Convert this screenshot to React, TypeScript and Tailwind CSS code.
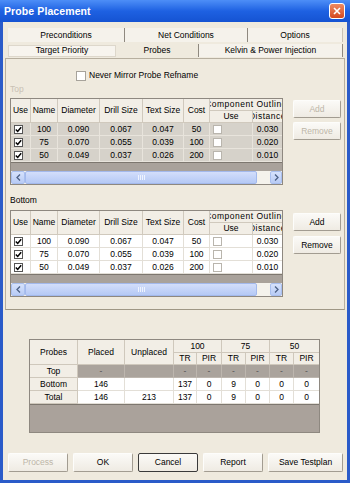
import React from "react";

const W = ["w-[20px]", "w-[27px]", "w-[42px]", "w-[43px]", "w-[41px]", "w-[26px]"];
const HEAD = ["Use", "Name", "Diameter", "Drill Size", "Text Size", "Cost"];
const ROWS = [
  ["100", "0.090", "0.067", "0.047", "50", "0.030"],
  ["75", "0.070", "0.055", "0.039", "100", "0.020"],
  ["50", "0.049", "0.037", "0.026", "200", "0.010"],
];

function Check({ checked, light }: { checked?: boolean; light?: boolean }) {
  return (
    <div
      className={`w-[9px] h-[9px] bg-white border ${
        light ? "border-[#b9b5ad]" : "border-[#555]"
      } flex items-center justify-center shrink-0`}
    >
      {checked && (
        <svg width="7" height="7" viewBox="0 0 7 7">
          <path d="M0.8 3.4 L2.7 5.4 L6.2 1.2" stroke="#000" strokeWidth="1.5" fill="none" />
        </svg>
      )}
    </div>
  );
}

function ScrollBar() {
  return (
    <div className="h-[13px] flex bg-[#f4f2ec] shrink-0">
      <div className="w-[14px] h-full bg-gradient-to-b from-[#d6e2fc] to-[#b8cbf5] border border-[#a9bfee] rounded-[2px] flex items-center justify-center">
        <svg width="5" height="7" viewBox="0 0 5 7">
          <path d="M4 0.5 L1 3.5 L4 6.5" stroke="#4d6185" strokeWidth="1.3" fill="none" />
        </svg>
      </div>
      <div className="w-[232px] h-full bg-gradient-to-b from-[#d3defb] to-[#b5c9f5] border border-[#a3b9ec] rounded-[2px] flex items-center justify-center gap-[1px]">
        <div className="w-[1px] h-[5px] bg-[#eef3fe]" />
        <div className="w-[1px] h-[5px] bg-[#eef3fe]" />
        <div className="w-[1px] h-[5px] bg-[#eef3fe]" />
        <div className="w-[1px] h-[5px] bg-[#eef3fe]" />
      </div>
      <div className="flex-1" />
      <div className="w-[12px] h-full bg-gradient-to-b from-[#d6e2fc] to-[#b8cbf5] border border-[#a9bfee] rounded-[2px] flex items-center justify-center">
        <svg width="5" height="7" viewBox="0 0 5 7">
          <path d="M1 0.5 L4 3.5 L1 6.5" stroke="#4d6185" strokeWidth="1.3" fill="none" />
        </svg>
      </div>
    </div>
  );
}

function Grid({ gray }: { gray: boolean }) {
  const rowBg = gray ? "bg-[#d6d2ca]" : "bg-white";
  const line = gray ? "border-[#e8e4dc]" : "border-[#e3dfd7]";
  return (
    <div className="w-[273px] h-[87px] border border-[#8e8880] flex flex-col overflow-hidden bg-[#a9a29b] shrink-0">
      <div className="flex h-[24px] bg-[#f2eee6] shrink-0">
        {HEAD.map((h, i) => (
          <div
            key={h}
            className={`${W[i]} h-full border-r border-b border-[#d0c9bd] flex items-center justify-center whitespace-nowrap overflow-hidden`}
          >
            {h}
          </div>
        ))}
        <div className="w-[72px] h-full flex flex-col">
          <div className="h-[12px] border-b border-[#d0c9bd] flex items-center justify-center whitespace-nowrap overflow-hidden tracking-[0.5px]">
            Component Outline
          </div>
          <div className="flex-1 flex">
            <div className="w-[43px] border-r border-b border-[#d0c9bd] flex items-center justify-center">Use</div>
            <div className="w-[29px] border-b border-[#d0c9bd] flex items-center justify-center whitespace-nowrap overflow-hidden tracking-[0.5px]">
              Distance
            </div>
          </div>
        </div>
      </div>
      {ROWS.map((r) => (
        <div key={r[0]} className={`flex h-[13px] shrink-0 ${rowBg}`}>
          <div className={`${W[0]} border-r border-b ${line} flex items-center pl-[3px]`}>
            <Check checked />
          </div>
          <div className={`${W[1]} border-r border-b ${line} flex items-center justify-center`}>{r[0]}</div>
          <div className={`${W[2]} border-r border-b ${line} flex items-center justify-center`}>{r[1]}</div>
          <div className={`${W[3]} border-r border-b ${line} flex items-center justify-center`}>{r[2]}</div>
          <div className={`${W[4]} border-r border-b ${line} flex items-center justify-center`}>{r[3]}</div>
          <div className={`${W[5]} border-r border-b ${line} flex items-center justify-center`}>{r[4]}</div>
          <div className={`w-[43px] border-r border-b ${line} flex items-center pl-[3px]`}>
            <Check light />
          </div>
          <div className={`w-[29px] border-b ${line} flex items-center justify-center`}>{r[5]}</div>
        </div>
      ))}
      <div className="flex-1 border-t border-[#7d776f]" />
      <ScrollBar />
    </div>
  );
}

function Btn({
  children,
  w,
  h,
  disabled,
  focus,
}: {
  children: React.ReactNode;
  w: string;
  h: string;
  disabled?: boolean;
  focus?: boolean;
}) {
  return (
    <div
      className={`${w} ${h} flex items-center justify-center rounded-[2px] bg-gradient-to-b from-[#fbfaf7] to-[#efebe3] border ${
        focus
          ? "border-[#3a3a3a]"
          : "border-t-[#fdfdfb] border-l-[#fdfdfb] border-b-[#a29c91] border-r-[#a29c91]"
      } ${disabled ? "text-[#bdb6a8]" : "text-black"}`}
    >
      {children}
    </div>
  );
}

const SW = ["w-[48px]", "w-[47px]", "w-[49px]"];

function Summary() {
  const hb = "border-[#cfc8bc]";
  const groups = ["100", "75", "50"];
  const sub = ["w-[23px]", "w-[24px]", "w-[24px]"];
  const gw = ["w-[48px]", "w-[48px]", "w-[49px]"];
  const data: { label: string; vals: string[]; top?: boolean }[] = [
    { label: "Top", vals: ["-", "", "-", "-", "-", "-", "-", "-"], top: true },
    { label: "Bottom", vals: ["146", "", "137", "0", "9", "0", "0", "0"] },
    { label: "Total", vals: ["146", "213", "137", "0", "9", "0", "0", "0"] },
  ];
  const widths = ["w-[47px]", "w-[49px]", "w-[23px]", "w-[25px]", "w-[24px]", "w-[24px]", "w-[24px]", "w-[25px]"];
  return (
    <div className="ml-[26px] mt-[29px] w-[291px] h-[94px] border border-[#8e8880] flex flex-col bg-[#aaa29b] overflow-hidden">
      <div className="flex h-[25px] bg-[#f2eee6] shrink-0">
        {["Probes", "Placed", "Unplaced"].map((h, i) => (
          <div key={h} className={`${SW[i]} h-full border-r border-b ${hb} flex items-center justify-center`}>
            {h}
          </div>
        ))}
        {groups.map((g, gi) => (
          <div key={g} className={`${gw[gi]} h-full flex flex-col ${gi < 2 ? `border-r ${hb}` : ""}`}>
            <div className={`h-[13px] border-b ${hb} flex items-center justify-center`}>{g}</div>
            <div className="flex-1 flex">
              <div className={`${sub[gi]} border-r border-b ${hb} flex items-center justify-center`}>TR</div>
              <div className={`flex-1 border-b ${hb} flex items-center justify-center`}>PIR</div>
            </div>
          </div>
        ))}
      </div>
      {data.map((row) => (
        <div key={row.label} className="flex h-[13px] shrink-0">
          <div className={`w-[48px] bg-[#f2eee6] border-r border-b ${hb} flex items-center justify-center`}>
            {row.label}
          </div>
          {row.vals.map((v, i) => (
            <div
              key={i}
              className={`${widths[i]} border-b ${i < 7 ? "border-r" : ""} flex items-center justify-center ${
                row.top ? "bg-[#aaa39c] border-[#bdb6ae] text-[#555]" : "bg-white border-[#e3dfd7]"
              }`}
            >
              {v}
            </div>
          ))}
        </div>
      ))}
      <div className="flex-1 border-t border-[#7d776f]" />
    </div>
  );
}

export default function App() {
  return (
    <div className="w-[350px] h-[483px] bg-[#2a5bc9] flex flex-col overflow-hidden font-['Liberation_Sans',Arial,sans-serif] text-[8.5px] text-black leading-none">
      <div className="h-[22px] shrink-0 flex items-center justify-between pl-[4px] pr-[5px] bg-gradient-to-b from-[#4d8ef7] via-[#1e61e2] to-[#1553d2]">
        <span className="text-white font-bold text-[10.5px] tracking-[0.1px]">Probe Placement</span>
        <div className="w-[16px] h-[16px] rounded-[3px] border border-white bg-gradient-to-b from-[#ee8a62] to-[#d4471c] flex items-center justify-center">
          <svg width="8" height="8" viewBox="0 0 8 8">
            <path d="M1 1 L7 7 M7 1 L1 7" stroke="#fff" strokeWidth="1.6" />
          </svg>
        </div>
      </div>
      <div className="flex-1 mx-[3px] mb-[3px] bg-[#efeade] flex flex-col">
        <div className="mt-[5px] mx-[2px] flex flex-col">
          <div className="h-[16px] flex items-center pl-[3px]">
            <div className="w-[117px] h-[14px] bg-[#f5f2eb] flex items-center justify-center border-r border-[#8f897f]">
              Preconditions
            </div>
            <div className="w-[123px] h-[14px] bg-[#f5f2eb] flex items-center justify-center border-r border-[#8f897f]">
              Net Conditions
            </div>
            <div className="w-[95px] h-[14px] bg-[#f5f2eb] flex items-center justify-center border-r border-[#c8c1b4]">
              Options
            </div>
          </div>
          <div className="h-[15px] flex items-center pl-[3px]">
            <div className="w-[108px] h-[12px] bg-[#f7f4ee] border border-[#ddd7cb] flex items-center justify-center">
              Target Priority
            </div>
            <div className="w-[82px] h-full flex items-center justify-center">Probes</div>
            <div className="w-[145px] h-[13px] bg-[#f5f2eb] border-l border-r border-[#8f897f] flex items-center justify-center">
              Kelvin &amp; Power Injection
            </div>
          </div>
          <div className="h-[252px] border border-[#b7af9f] border-b-[#9f9785] flex flex-col px-[4px]">
            <div className="mt-[11px] h-[11px] flex items-center pl-[66px]">
              <div className="w-[10px] h-[10px] bg-white border border-[#a7a39b]" />
              <span className="ml-[3px]">Never Mirror Probe Refname</span>
            </div>
            <div className="mt-[3px] h-[11px] flex items-center text-[#c9c1b4]">Top</div>
            <div className="mt-[3px] flex">
              <Grid gray />
              <div className="ml-[10px] mt-[2px] flex flex-col gap-[4px]">
                <Btn w="w-[48px]" h="h-[18px]" disabled>
                  Add
                </Btn>
                <Btn w="w-[48px]" h="h-[18px]" disabled>
                  Remove
                </Btn>
              </div>
            </div>
            <div className="mt-[10px] h-[11px] flex items-center">Bottom</div>
            <div className="mt-[4px] flex">
              <Grid gray={false} />
              <div className="ml-[10px] mt-[3px] flex flex-col gap-[5px]">
                <Btn w="w-[48px]" h="h-[18px]">
                  Add
                </Btn>
                <Btn w="w-[48px]" h="h-[18px]">
                  Remove
                </Btn>
              </div>
            </div>
          </div>
        </div>
        <Summary />
        <div className="mt-[20px] ml-[5px] flex gap-[5px]">
          <Btn w="w-[60px]" h="h-[19px]" disabled>
            Process
          </Btn>
          <Btn w="w-[60px]" h="h-[19px]">
            OK
          </Btn>
          <Btn w="w-[60px]" h="h-[19px]" focus>
            Cancel
          </Btn>
          <Btn w="w-[60px]" h="h-[19px]">
            Report
          </Btn>
          <Btn w="w-[75px]" h="h-[19px]">
            Save Testplan
          </Btn>
        </div>
      </div>
    </div>
  );
}
